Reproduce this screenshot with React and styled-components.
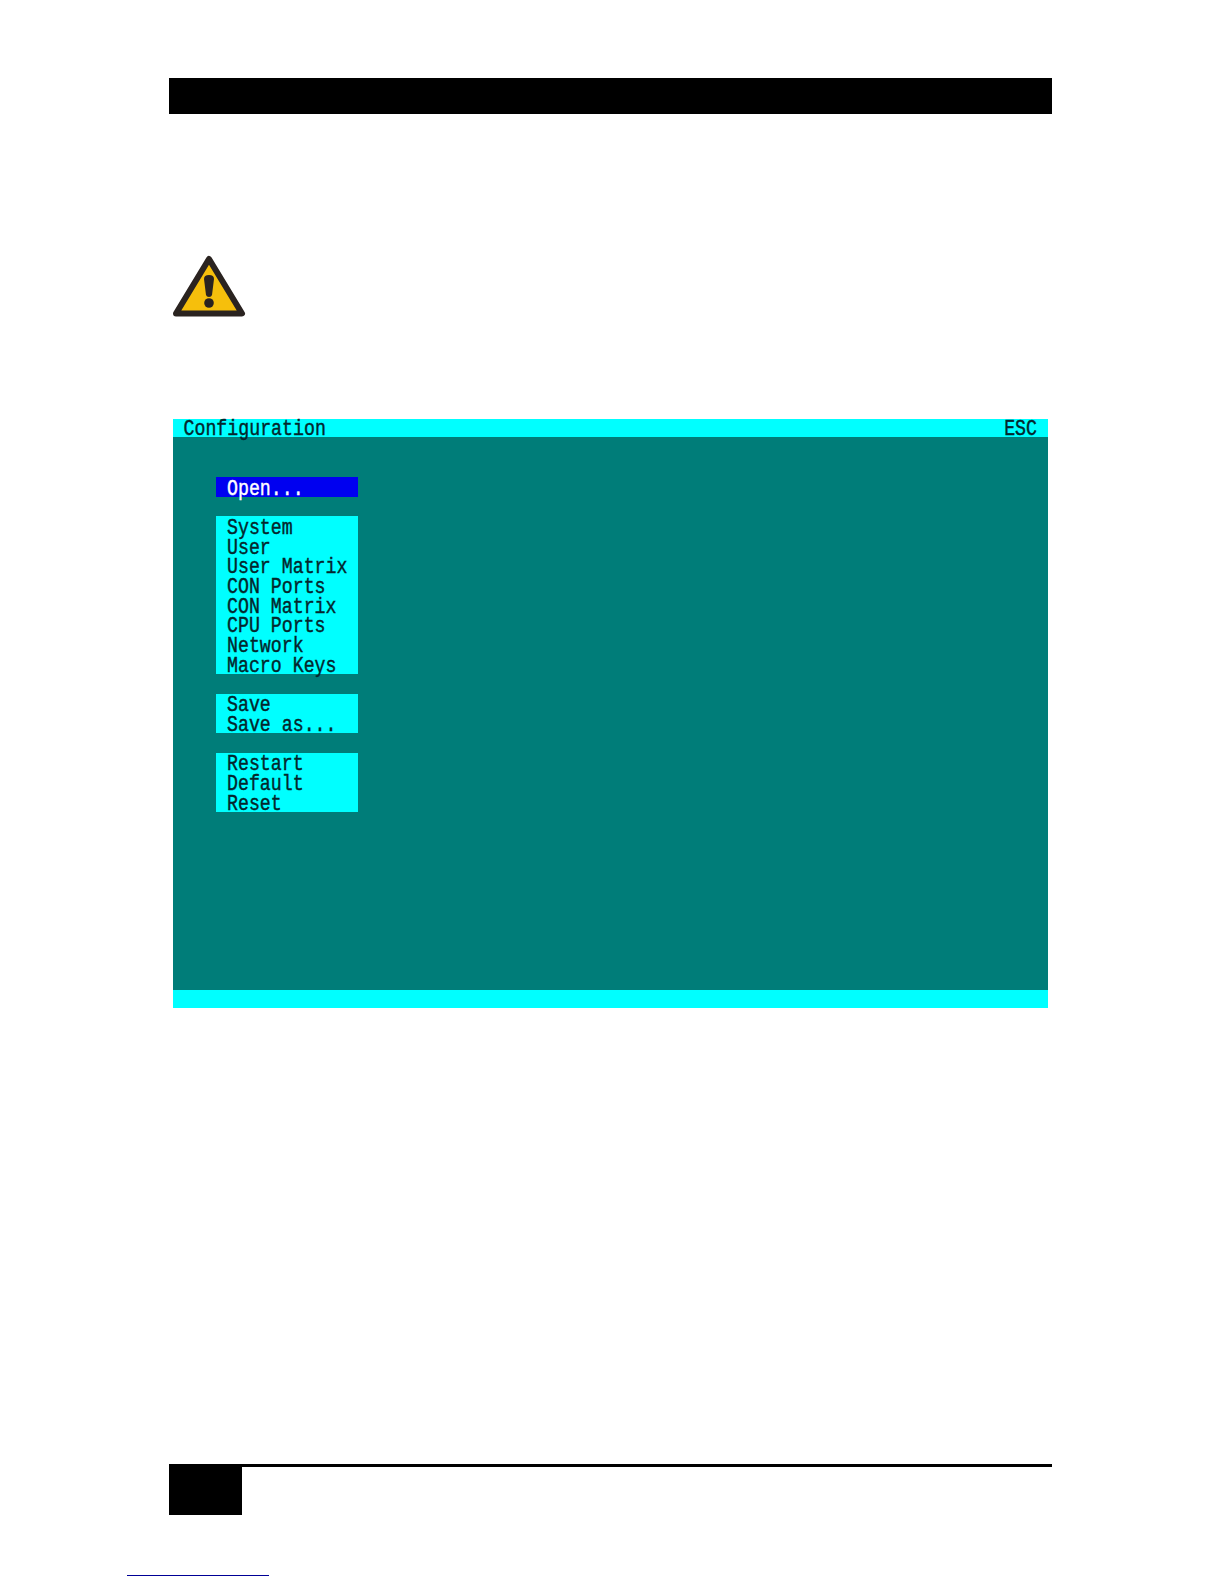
import styled, { createGlobalStyle } from 'styled-components'

const GlobalStyle = createGlobalStyle`
  html, body {
    margin: 0;
    padding: 0;
    background: #fff;
  }
`

const Page = styled.div`
  width: 1224px;
  height: 1584px;
  box-sizing: border-box;
  padding: 78px 172px 0 169px;
  overflow: hidden;
  display: flex;
  flex-direction: column;
`

const HeaderBar = styled.div`
  height: 36px;
  background: #000;
`

const WarningIcon = styled.svg`
  display: block;
  width: 74px;
  height: 64px;
  margin: 140px 0 0 3px;
`

const Screen = styled.div`
  margin: 101px 4px 0 3.5px;
  height: 589px;
  display: flex;
  flex-direction: column;
  background: #007d79;
  font-family: 'Liberation Mono', monospace;
  font-size: 18.25px;
  font-weight: 400;
  -webkit-text-stroke: 0.35px currentColor;
  color: #04262c;
`

const StatusBar = styled.div`
  height: 18px;
  flex: none;
  box-sizing: border-box;
  display: flex;
  justify-content: space-between;
  padding: 2px 11px 0;
  background: #00ffff;
`

const MenuArea = styled.div`
  flex: 1;
  display: flex;
  flex-direction: column;
  gap: 19.7px;
  padding: 40px 0 0 43.5px;
`

const MenuGroup = styled.div`
  width: 142px;
  background: ${(props) => (props.$active ? '#0000f0' : '#00ffff')};
  color: ${(props) => (props.$active ? '#fff' : 'inherit')};
`

const MenuItem = styled.div`
  height: 19.7px;
  box-sizing: border-box;
  padding: 3.5px 0 0 11px;
  white-space: pre;
`

const Tall = styled.span`
  display: block;
  height: 15px;
  line-height: 15px;
  transform: scaleY(1.2);
  transform-origin: 0 0;
`

const Footer = styled.div`
  margin-top: 456px;
  height: 51px;
  border-top: 3px solid #000;
  box-sizing: border-box;
`

const PageBlock = styled.div`
  width: 73px;
  height: 48px;
  background: #000;
`

const LinkLine = styled.div`
  width: 142px;
  height: 1px;
  margin: 60px 0 0 -42px;
  background: #000096;
`

const groups = [
  { active: true, items: ['Open...'] },
  {
    items: [
      'System',
      'User',
      'User Matrix',
      'CON Ports',
      'CON Matrix',
      'CPU Ports',
      'Network',
      'Macro Keys',
    ],
  },
  { items: ['Save', 'Save as...'] },
  { items: ['Restart', 'Default', 'Reset'] },
]

const App = () => {
  return (
    <Page>
      <GlobalStyle />
      <HeaderBar />

      <WarningIcon viewBox='0 0 74 64'>
        <path
          d='M37 5 L70 59.5 L4 59.5 Z'
          fill='#f6bf0c'
          stroke='#2a2320'
          strokeWidth='6'
          strokeLinejoin='round'
        />
        <path
          d='M32 25 Q32 21 37 21 Q42 21 42 25 L40 41 Q39.5 43 37 43 Q34.5 43 34 41 Z'
          fill='#2a2320'
        />
        <circle cx='37' cy='49' r='4.8' fill='#2a2320' />
      </WarningIcon>

      <Screen>
        <StatusBar>
          <Tall>Configuration</Tall>
          <Tall>ESC</Tall>
        </StatusBar>

        <MenuArea>
          {groups.map((group) => (
            <MenuGroup key={group.items[0]} $active={group.active}>
              {group.items.map((item) => (
                <MenuItem key={item}>
                  <Tall>{item}</Tall>
                </MenuItem>
              ))}
            </MenuGroup>
          ))}
        </MenuArea>

        <StatusBar />
      </Screen>

      <Footer>
        <PageBlock />
      </Footer>

      <LinkLine />
    </Page>
  )
}

export default App
